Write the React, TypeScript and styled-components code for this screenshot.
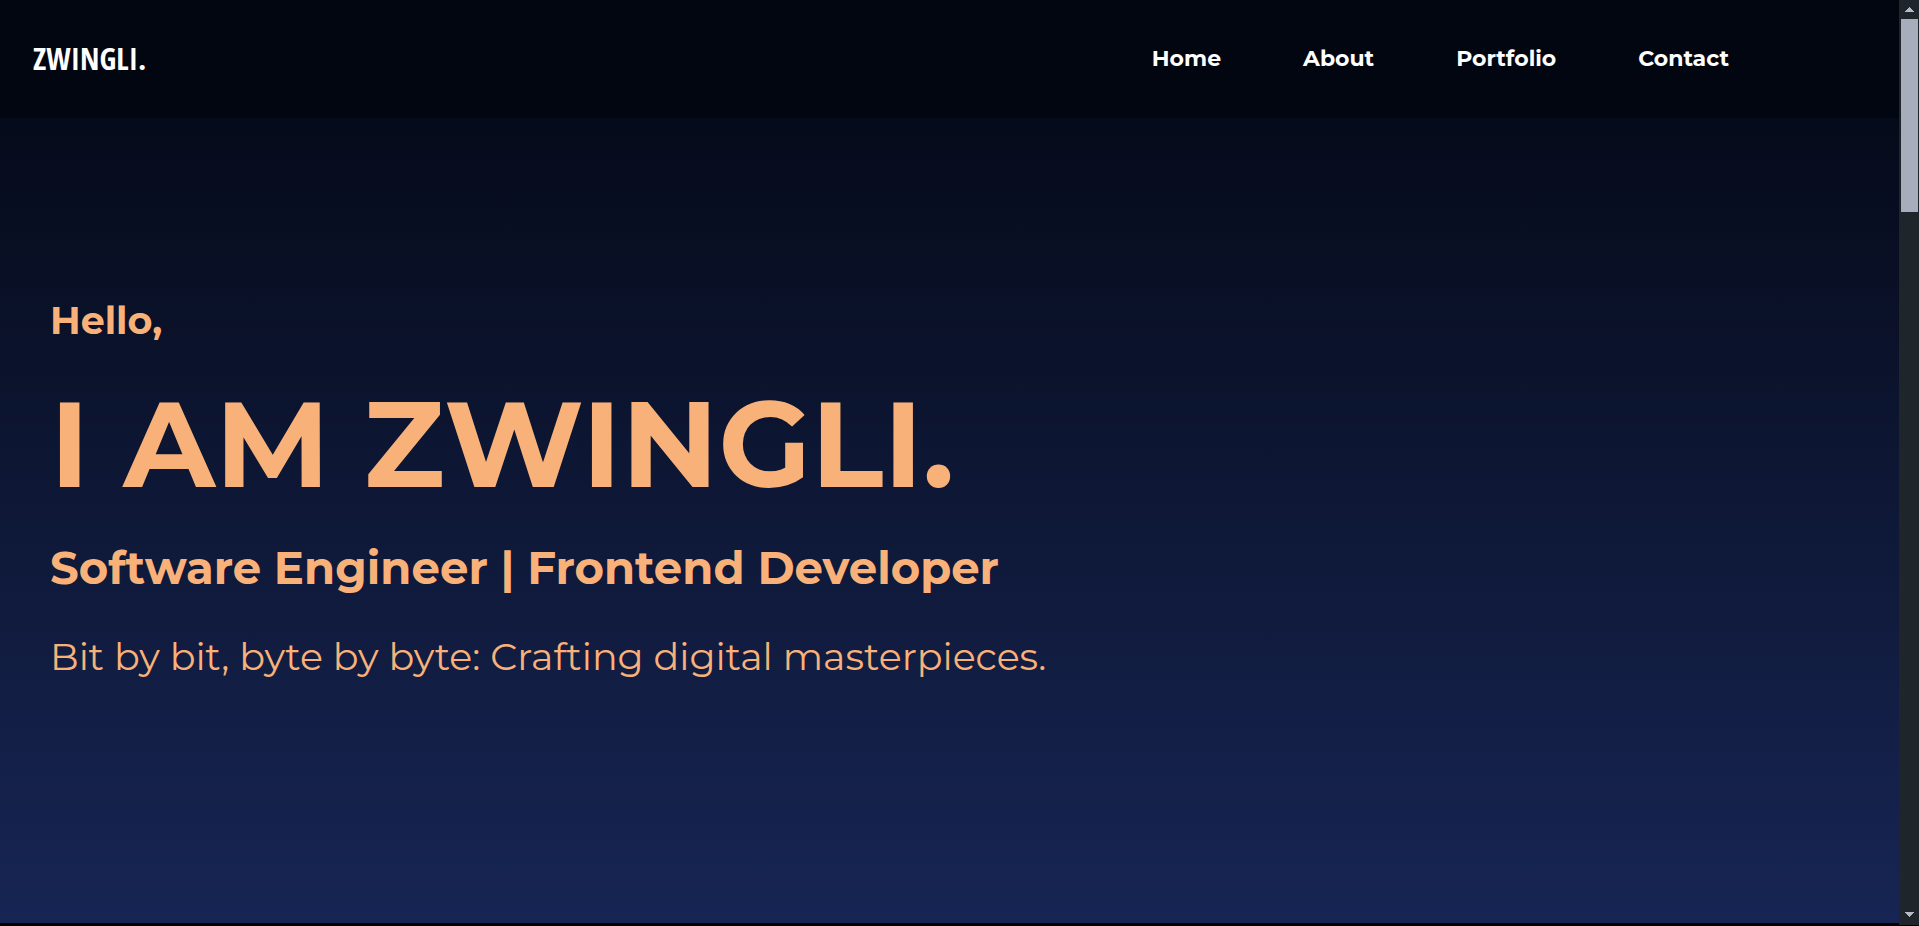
import React from "react";
import styled, { createGlobalStyle } from "styled-components";

const GlobalStyle = createGlobalStyle`
  * { box-sizing: border-box; }
  body {
    margin: 0;
    background: #000;
    font-family: Montserrat, Inter, sans-serif;
  }
`;

const Page = styled.div`
  display: flex;
  height: 100vh;
  overflow: hidden;
`;

const Content = styled.div`
  flex: 1;
  display: flex;
  flex-direction: column;
  min-width: 0;
  margin-bottom: 3px;
  background: linear-gradient(180deg, #030712 0%, #172554 100%);
`;

const Header = styled.header`
  display: flex;
  align-items: center;
  justify-content: space-between;
  height: 118px;
  padding: 0 170px 0 33px;
  background: #020610;
`;

const Logo = styled.a`
  padding-bottom: 2px;
  color: #fff;
  font-family: "Open Sans Condensed", "Liberation Sans Narrow", "Noto Sans", sans-serif;
  font-size: 31px;
  font-weight: 800;
  text-decoration: none;
`;

const Nav = styled.nav`
  display: flex;
  gap: 82px;
`;

const NavLink = styled.a`
  color: #fff;
  font-size: 22px;
  line-height: 32px;
  font-weight: 700;
  text-decoration: none;
`;

const Hero = styled.main`
  flex: 1;
  display: flex;
  flex-direction: column;
  padding: 175px 50px 0;
  color: #f9b17a;
`;

const Greeting = styled.p`
  margin: 0;
  font-size: 38px;
  line-height: 56px;
  font-weight: 700;
`;

const Name = styled.h1`
  margin: 24px 0;
  font-size: 120px;
  line-height: 142px;
  font-weight: 700;
`;

const Role = styled.h2`
  margin: 0;
  font-size: 45px;
  line-height: 58px;
  font-weight: 700;
`;

const Tagline = styled.p`
  margin: 32px 0 0;
  font-size: 38px;
  line-height: 56px;
  font-weight: 400;
`;

const ScrollRail = styled.aside`
  display: flex;
  flex-direction: column;
  align-items: center;
  width: 20px;
  margin-bottom: 1px;
  padding: 7px 0 8px;
  background: #1f262b;
`;

const Thumb = styled.div`
  width: 17px;
  height: 193px;
  margin: 7px 0 auto;
  background: #a7adbb;
`;

const Arrow = ({ down = false }: { down?: boolean }) => (
  <svg width="9" height="5" viewBox="0 0 9 5" fill="#b4bac8" shapeRendering="crispEdges" aria-hidden="true">
    <path d={down ? "M0 0H9L4.500 5Z" : "M0 5H9L4.500 0Z"} />
  </svg>
);

const links = ["Home", "About", "Portfolio", "Contact"];

export default function App() {
  return (
    <>
      <GlobalStyle />
      <Page>
        <Content>
          <Header>
            <Logo href="#home">ZWINGLI.</Logo>
            <Nav>
              {links.map((label) => (
                <NavLink key={label} href={`#${label.toLowerCase()}`}>{label}</NavLink>
              ))}
            </Nav>
          </Header>
          <Hero>
            <Greeting>Hello,</Greeting>
            <Name>I AM ZWINGLI.</Name>
            <Role>Software Engineer | Frontend Developer</Role>
            <Tagline>Bit by bit, byte by byte: Crafting digital masterpieces.</Tagline>
          </Hero>
        </Content>
        <ScrollRail>
          <Arrow />
          <Thumb />
          <Arrow down />
        </ScrollRail>
      </Page>
    </>
  );
}
